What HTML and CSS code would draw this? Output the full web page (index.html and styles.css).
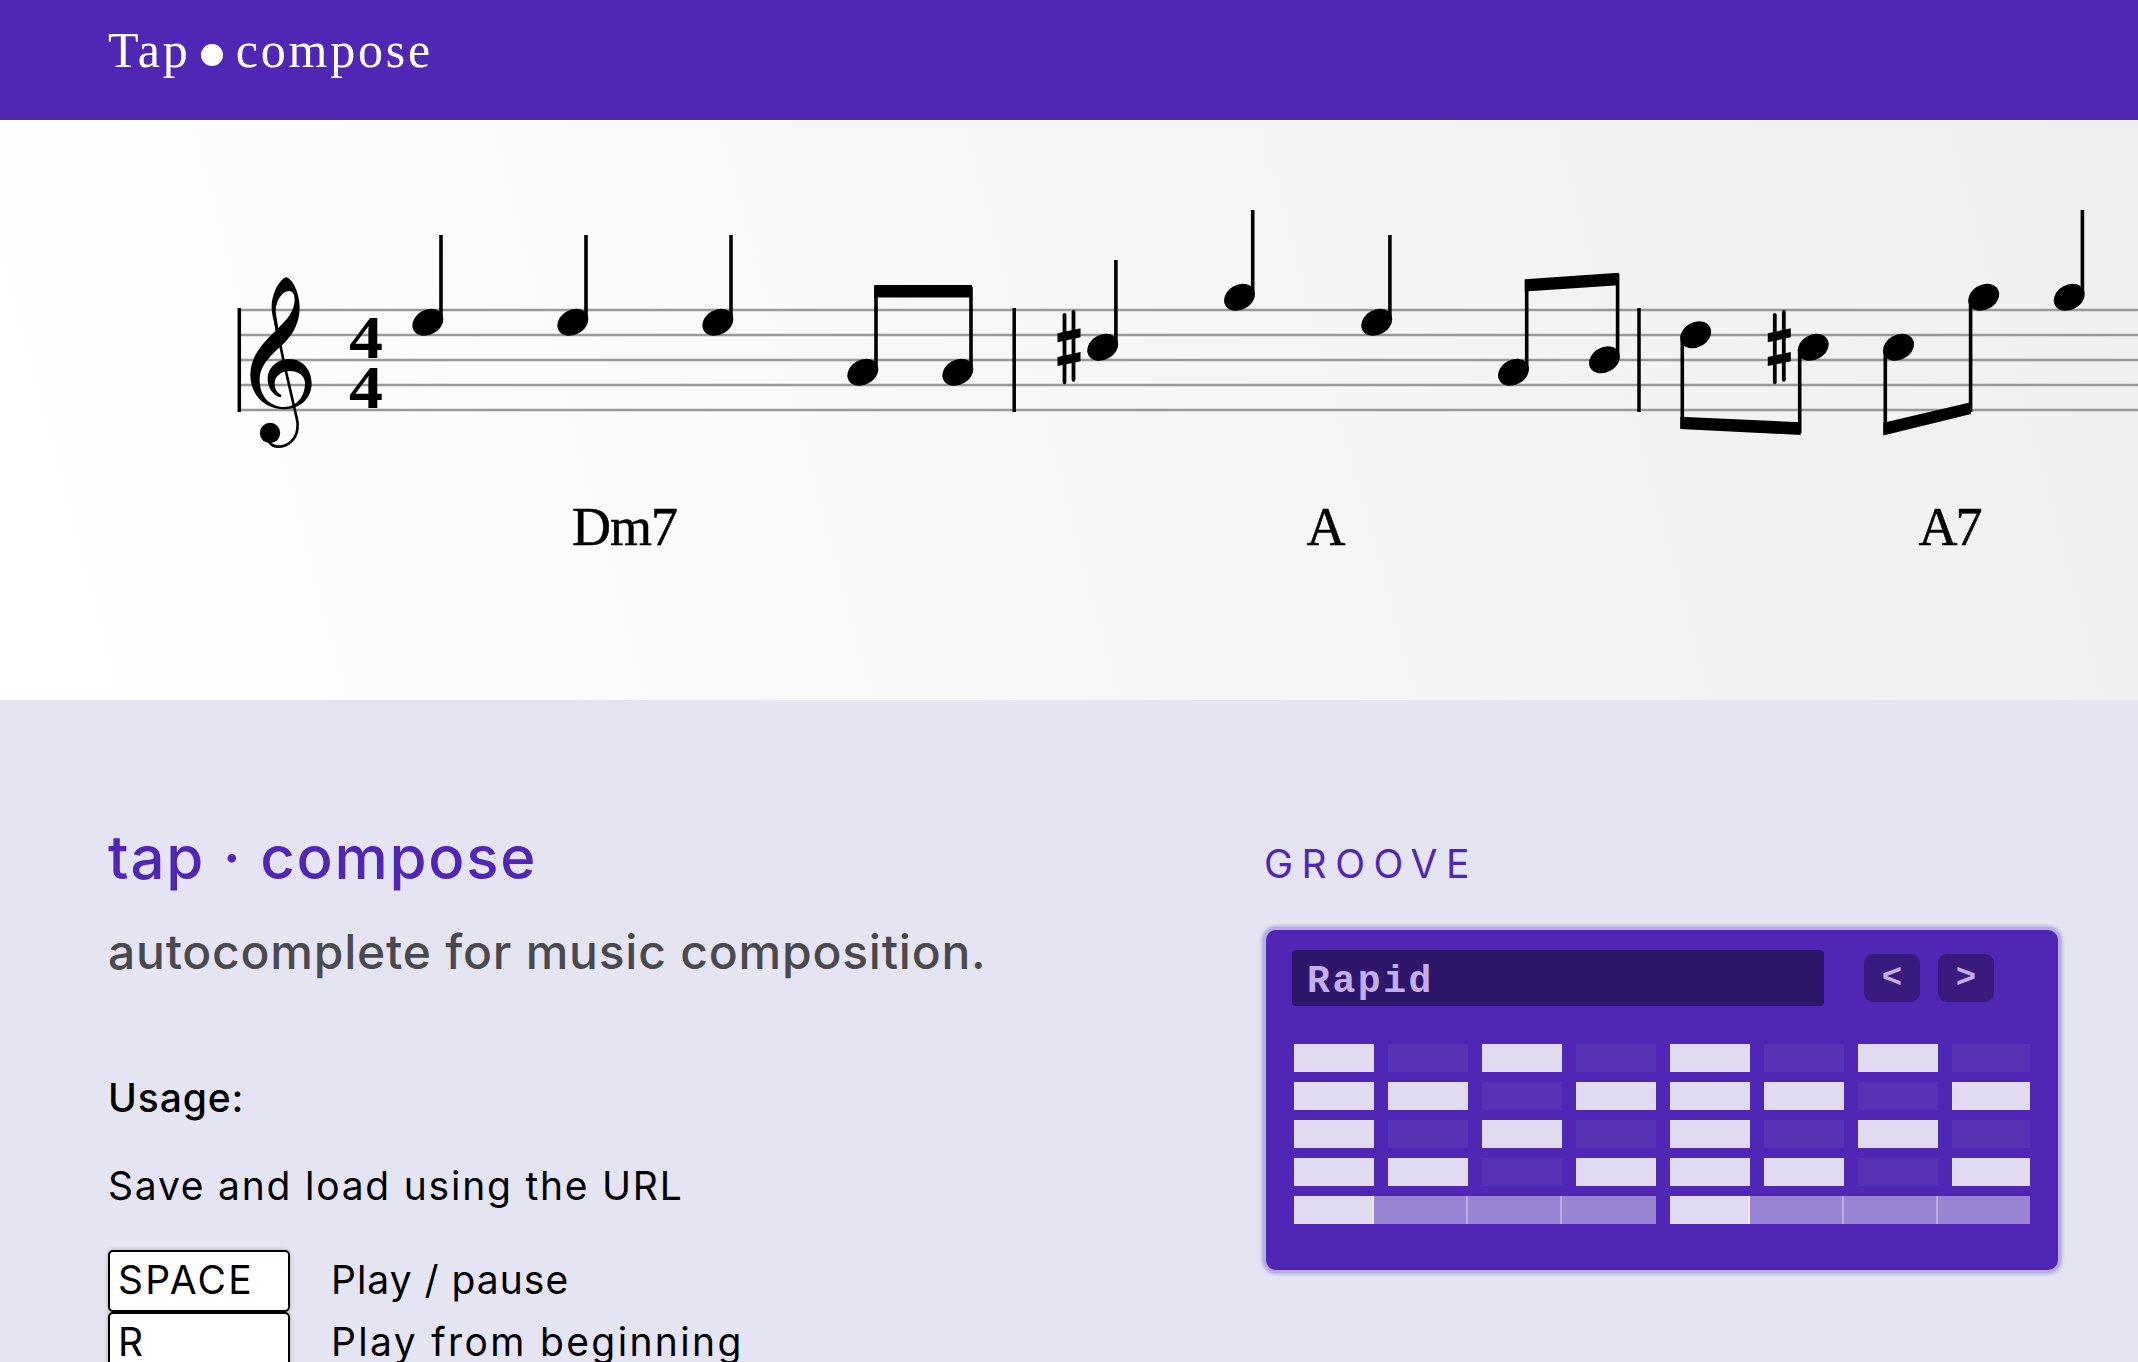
FILE: index.html
```html
<!DOCTYPE html>
<html lang="en">
<head>
<meta charset="utf-8">
<title>Tap compose</title>
<link rel="stylesheet" href="styles.css">
</head>
<body>
<header class="topbar">
  <span class="brand brand-tap">Tap</span>
  <svg class="brand-dot" viewBox="0 0 22 22"><circle cx="11" cy="11" r="11"/></svg>
  <span class="brand brand-compose">compose</span>
</header>

<section class="score">
  <svg class="sheet" viewBox="0 120 2138 580">
    <defs>
      <ellipse id="head" rx="16.3" ry="12.4" transform="rotate(-30)"/>
      <g id="quarter"><use href="#head"/><path class="stem" d="M13.2-4V-87.3"/></g>
      <g id="sharp">
        <path class="sharp-stem" d="M-4.5-32.5V35M4.5-35.5V32.5"/>
        <path d="M-11.5-14L11.5-19V-10L-11.5-5ZM-11.5 9.7L11.5 4.7V14L-11.5 18.7Z"/>
      </g>
    </defs>
    <path class="staff" d="M240 310H2138M240 335H2138M240 360H2138M240 385H2138M240 410H2138"/>
    <path class="bar" d="M239.3 308V412M1014.2 308V412M1639 308V412"/>

    <!-- treble clef -->
    <g transform="translate(220 220) scale(.33333)">
      <path d="M199 171C222 180 239 226 239 262C239 305 222 340 193 369C155 404 119 434 119 480C119 530 150 561 193 561C230 561 255 530 255 490C255 467 235 453 208 453C182 453 164 470 164 490C164 510 172 518 184 525C185 532 178 532 172 529C155 520 143 500 143 478C143 442 172 417 208 417C248 417 275 450 275 490C275 535 240 568 193 568C135 568 91 525 91 465C91 410 125 373 168 331C200 300 224 275 224 238C224 222 217 213 207 213C188 213 167 240 167 275L175 328L167 332C163 305 155 285 155 262C155 222 176 180 199 171Z"/>
      <path class="clef-line" d="M166 300C169 330 181 372 190 420L230 594Q235 610 232 628C228 658 204 680 175 680C165 680 155 676 148 667"/>
      <circle cx="150" cy="639" r="30.5"/>
    </g>
    <text class="meter" x="349" y="357.7" textLength="34" lengthAdjust="spacingAndGlyphs">4</text>
    <text class="meter" x="349" y="407.7" textLength="34" lengthAdjust="spacingAndGlyphs">4</text>

    <!-- measure 1 -->
    <use href="#quarter" x="427.8" y="322.3"/>
    <use href="#quarter" x="572.8" y="322.3"/>
    <use href="#quarter" x="717.8" y="322.3"/>
    <use href="#head" x="862.8" y="372.3"/>
    <use href="#head" x="957.8" y="372.3"/>
    <path class="stem" d="M876 368V287M971 368V287"/>
    <path d="M874.2 285H972V297.5H874.2Z"/>
    <text class="chord" x="572" y="544.7" textLength="106">Dm7</text>

    <!-- measure 2 -->
    <use href="#sharp" x="1069" y="347.3"/>
    <use href="#quarter" x="1102.7" y="347.3"/>
    <use href="#quarter" x="1239.5" y="297.3"/>
    <use href="#quarter" x="1376.7" y="322.3"/>
    <use href="#head" x="1513.5" y="372.3"/>
    <use href="#head" x="1604.5" y="359.8"/>
    <path class="stem" d="M1526.7 368V280M1617.6 355V274"/>
    <path d="M1524.7 279.3L1618.7 272.7V285.2L1524.7 291.6Z"/>
    <text class="chord" x="1306.5" y="544.7">A</text>

    <!-- measure 3 -->
    <use href="#head" x="1695.7" y="334.8"/>
    <use href="#sharp" x="1779.3" y="347.3"/>
    <use href="#head" x="1813.2" y="347.3"/>
    <path class="stem" d="M1682.3 336V428M1799.7 350V433"/>
    <path d="M1680.3 416.7L1800.7 422.3V435L1680.3 429Z"/>
    <use href="#head" x="1898.5" y="347.3"/>
    <use href="#head" x="1983.7" y="297.3"/>
    <path class="stem" d="M1885.3 350V433M1970.6 300V412"/>
    <path d="M1883.3 422.7L1971 402.3V414L1883.3 435.5Z"/>
    <use href="#quarter" x="2069.2" y="297.3"/>
    <text class="chord" x="1918.5" y="544.7" textLength="64">A7</text>
  </svg>
</section>

<main class="content">
  <section class="about">
    <h1 class="title">tap · compose</h1>
    <h2 class="tagline">autocomplete for music composition.</h2>
    <h3 class="usage">Usage:</h3>
    <p class="hint">Save and load using the URL</p>
    <div class="shortcut"><kbd class="key">SPACE</kbd><span class="action action-toggle">Play / pause</span></div>
    <div class="shortcut"><kbd class="key">R</kbd><span class="action">Play from beginning</span></div>
  </section>
  <section class="groove">
    <h2 class="groove-title">GROOVE</h2>
    <div class="panel">
      <div class="controls">
        <div class="display">Rapid</div>
        <button class="step">&lt;</button>
        <button class="step">&gt;</button>
      </div>
      <div class="grid">
        <i class="cell on"></i><i class="cell"></i><i class="cell on"></i><i class="cell"></i><i class="cell on"></i><i class="cell"></i><i class="cell on"></i><i class="cell"></i>
        <i class="cell on"></i><i class="cell on"></i><i class="cell"></i><i class="cell on"></i><i class="cell on"></i><i class="cell on"></i><i class="cell"></i><i class="cell on"></i>
        <i class="cell on"></i><i class="cell"></i><i class="cell on"></i><i class="cell"></i><i class="cell on"></i><i class="cell"></i><i class="cell on"></i><i class="cell"></i>
        <i class="cell on"></i><i class="cell on"></i><i class="cell"></i><i class="cell on"></i><i class="cell on"></i><i class="cell on"></i><i class="cell"></i><i class="cell on"></i>
      </div>
      <div class="bass">
        <div class="phrase"><i class="beat hit"></i><i class="beat"></i><i class="beat"></i><i class="beat"></i></div>
        <div class="phrase"><i class="beat hit"></i><i class="beat"></i><i class="beat"></i><i class="beat"></i></div>
      </div>
    </div>
  </section>
</main>
</body>
</html>
```
FILE: styles.css
```css
* { box-sizing: border-box; }
body {
  margin: 0;
  height: 1362px;
  overflow: hidden;
  background: #e5e4f2;
  color: #000;
  font-family: Inter, "Open Sans", sans-serif;
}
h1, h2, h3, p { margin: 0; font-weight: 400; white-space: nowrap; }

.topbar {
  display: flex;
  height: 120px;
  padding-left: 108px;
  background: #4f27b4;
  color: #fff;
}
.brand { font: 50px/60px "Liberation Serif", serif; padding-top: 20px; letter-spacing: 2.8px; }
.brand-dot { width: 22px; height: 22px; margin: 44px 13px 0 10px; fill: #fff; }

.score { height: 580px; background: linear-gradient(75deg, #fff 3%, #f7f7f7 45%, #efefef); }
.sheet { display: block; width: 2138px; height: 580px; }
.staff { stroke: #999; stroke-width: 2.6; }
.bar { stroke: #000; stroke-width: 3.5; }
.stem { stroke: #000; stroke-width: 3.6; }
.sharp-stem { stroke: #000; stroke-width: 3.8; stroke-linecap: round; }
.clef-line { fill: none; stroke: #000; stroke-width: 8; }
.meter { font: bold 62px "Liberation Serif", serif; }
.chord { font: 54px "Liberation Serif", serif; stroke: #000; stroke-width: .5; }

.content { display: grid; grid-template-columns: 1158px 792px; padding-left: 108px; }
.title {
  padding-top: 119px;
  font-size: 60px;
  line-height: 76px;
  font-weight: 500;
  letter-spacing: 1.7px;
  color: #4f27b4;
}
.tagline {
  margin-top: 19px;
  font-size: 48px;
  line-height: 76px;
  font-weight: 500;
  letter-spacing: .78px;
  color: #4a4a4e;
}
.usage { margin-top: 78px; font-size: 39px; line-height: 60px; font-weight: 500; letter-spacing: .9px; }
.hint { margin: 28px 0 34px; font-size: 39px; line-height: 60px; letter-spacing: 1.77px; }
.shortcut { display: flex; height: 62px; font-size: 39px; line-height: 60px; white-space: nowrap; }
.key {
  width: 182px;
  height: 62px;
  padding-left: 8px;
  border: 2px solid #000;
  border-radius: 5px;
  background: #fff;
  box-shadow: 0 0 4px rgba(0, 0, 0, .25);
  font-family: inherit;
  font-size: 39px;
  line-height: 56px;
  letter-spacing: 2.3px;
}
.action { margin-left: 41px; letter-spacing: 2.35px; }
.action-toggle { letter-spacing: 1px; }

.groove-title { padding-top: 130px; font-size: 39px; line-height: 68px; letter-spacing: 8.5px; text-indent: -2px; color: #4f27b4; }
.panel {
  height: 340px;
  margin-top: 32px;
  padding: 20px 26px 0;
  border-radius: 10px;
  background: #4f27b4;
  box-shadow: 0 0 0 2px #bfaae8, 0 0 4px 3px #8d8bd6;
}
.controls { display: flex; align-items: center; height: 56px; }
.display {
  width: 532px;
  height: 56px;
  margin-right: 40px;
  padding-left: 15px;
  border-radius: 4px;
  background: #2e176a;
  color: #c4aef0;
  font: bold 38px/63px "Liberation Mono", monospace;
  letter-spacing: 2.6px;
}
.step {
  width: 56px;
  height: 48px;
  margin-right: 18px;
  padding: 0;
  border: 0;
  border-radius: 9px;
  background: #391b7e;
  color: #c4aef0;
  font: bold 34px/48px "Liberation Mono", monospace;
}
.grid {
  display: grid;
  grid-template-columns: repeat(7, 80px) 78px;
  grid-auto-rows: 28px;
  gap: 10px 14px;
  margin: 38px 0 10px 2px;
}
.cell { background: #5732b5; }
.cell.on { background: #e0dbf0; }
.bass { display: flex; gap: 14px; margin-left: 2px; }
.phrase { display: flex; height: 28px; }
.beat { width: 94px; background: #9b84d4; border-right: 2px solid #bcabe3; }
.beat:last-child { border-right: 0; }
.phrase:last-child .beat:last-child { width: 92px; }
.beat.hit { width: 80px; background: #e0dbf0; border-color: #efecf8; }
```
